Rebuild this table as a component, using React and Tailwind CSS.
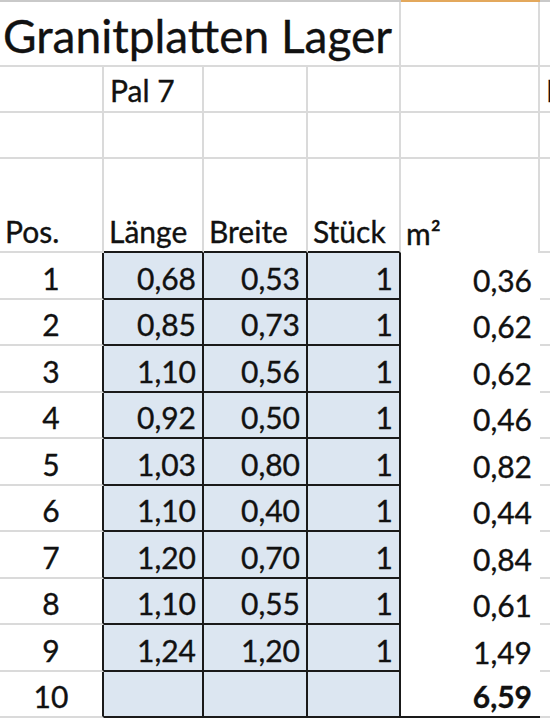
import React from "react";

const COLS = "grid grid-cols-[104px_100px_104px_93px_139px_1fr]";
const FONT = { fontFamily: "Lato, 'Liberation Sans', sans-serif" };

const data = [
  ["1", "0,68", "0,53", "1", "0,36"],
  ["2", "0,85", "0,73", "1", "0,62"],
  ["3", "1,10", "0,56", "1", "0,62"],
  ["4", "0,92", "0,50", "1", "0,46"],
  ["5", "1,03", "0,80", "1", "0,82"],
  ["6", "1,10", "0,40", "1", "0,44"],
  ["7", "1,20", "0,70", "1", "0,84"],
  ["8", "1,10", "0,55", "1", "0,61"],
  ["9", "1,24", "1,20", "1", "1,49"],
  ["10", "", "", "", "6,59"],
];

const heights = ["h-[47px]", "h-[46px]"];

export default function App() {
  return (
    <div
      className="w-[550px] h-[718px] overflow-hidden bg-white text-[#111] [-webkit-text-stroke:0.35px_#111]"
      style={FONT}
    >
      {/* column header bottom strip */}
      <div className={`${COLS} h-[2px]`}>
        <div className="col-span-4 bg-[#c9c9c9]" />
        <div className="bg-[#e3a85c]" />
        <div className="bg-[#c9c9c9]" />
      </div>

      {/* title row */}
      <div className={`${COLS} h-[65px]`}>
        <div className="col-span-4 flex items-end border-r-2 border-b-2 border-[#dadada] pl-[3px] pb-[6px] text-[46px] leading-none whitespace-nowrap">
          Granitplatten Lager
        </div>
        <div className="border-r-2 border-b-2 border-[#dadada]" />
        <div className="border-b-2 border-[#dadada]" />
      </div>

      {/* Pal row */}
      <div className={`${COLS} h-[46px] text-[30px] leading-none`}>
        <div className="border-r-2 border-b-2 border-[#dadada]" />
        <div className="flex items-end border-r-2 border-b-2 border-[#dadada] pl-[6px] pb-[6px]">
          Pal 7
        </div>
        <div className="border-r-2 border-b-2 border-[#dadada]" />
        <div className="border-r-2 border-b-2 border-[#dadada]" />
        <div className="border-r-2 border-b-2 border-[#dadada]" />
        <div className="flex items-end overflow-hidden whitespace-nowrap border-b-2 border-[#dadada] pl-[6px] pb-[6px]">
          Pal 8
        </div>
      </div>

      {/* empty row */}
      <div className={`${COLS} h-[46px]`}>
        <div className="border-r-2 border-b-2 border-[#dadada]" />
        <div className="border-r-2 border-b-2 border-[#dadada]" />
        <div className="border-r-2 border-b-2 border-[#dadada]" />
        <div className="border-r-2 border-b-2 border-[#dadada]" />
        <div className="border-r-2 border-b-2 border-[#dadada]" />
        <div className="border-b-2 border-[#dadada]" />
      </div>

      {/* header row */}
      <div className={`${COLS} h-[94px] text-[30px] leading-none whitespace-nowrap`}>
        <div className="flex items-end border-r-2 border-b-2 border-r-[#dadada] border-b-[#dadada] pl-[5px] pb-[5px]">
          Pos.
        </div>
        <div className="flex items-end border-r-2 border-b-2 border-r-[#dadada] border-b-[#1a1a1a] pl-[5px] pb-[5px]">
          Länge
        </div>
        <div className="flex items-end border-r-2 border-b-2 border-r-[#dadada] border-b-[#1a1a1a] pl-[5px] pb-[5px]">
          Breite
        </div>
        <div className="flex items-end border-r-2 border-b-2 border-r-[#dadada] border-b-[#1a1a1a] pl-[5px] pb-[5px]">
          Stück
        </div>
        <div className="flex items-end border-r-2 border-[#dadada] pl-[5px] pb-[5px]">
          m²
        </div>
        <div className="border-b-2 border-[#dadada]" />
      </div>

      {/* data rows */}
      {data.map((r, i) => {
        const last = i === data.length - 1;
        return (
          <div
            key={i}
            className={`${COLS} ${heights[i % 2]} text-[30px] leading-none`}
          >
            <div className="flex items-end justify-center border-r-2 border-b-2 border-r-[#1a1a1a] border-b-[#dadada] pb-[5px]">
              {r[0]}
            </div>
            <div className="flex items-end justify-end border-r-2 border-b-2 border-[#1a1a1a] bg-[#dce6f1] pr-[6px] pb-[5px]">
              {r[1]}
            </div>
            <div className="flex items-end justify-end border-r-2 border-b-2 border-[#1a1a1a] bg-[#dce6f1] pr-[6px] pb-[5px]">
              {r[2]}
            </div>
            <div className="flex items-end justify-end border-r-2 border-b-2 border-[#1a1a1a] bg-[#dce6f1] pr-[6px] pb-[5px]">
              {r[3]}
            </div>
            <div
              className={
                last
                  ? "flex items-end justify-end border-b-2 border-[#1a1a1a] bg-white pr-[8px] pb-[5px] font-bold"
                  : "flex items-end justify-end bg-white pr-[8px] pb-[5px]"
              }
            >
              {r[4]}
            </div>
            <div className="border-b-2 border-[#dadada]" />
          </div>
        );
      })}
    </div>
  );
}
